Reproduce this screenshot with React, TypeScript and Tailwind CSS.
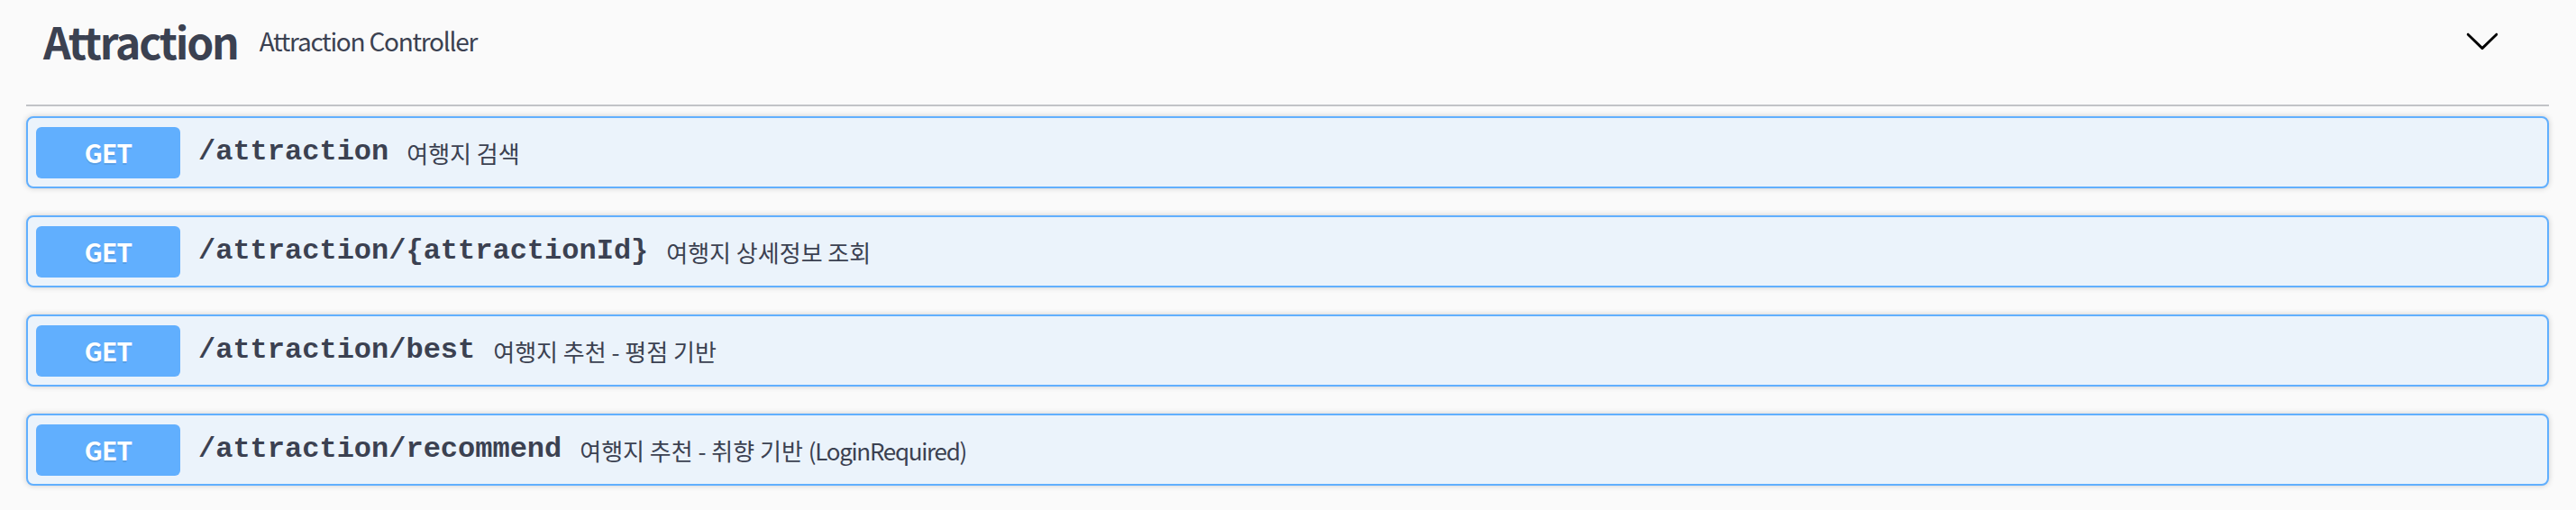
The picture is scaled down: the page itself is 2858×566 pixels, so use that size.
import React from "react";

const rows: { path: string; desc: string; extra?: string }[] = [
  { path: "/attraction", desc: "여행지 검색" },
  { path: "/attraction/{attractionId}", desc: "여행지 상세정보 조회" },
  { path: "/attraction/best", desc: "여행지 추천 - 평점 기반" },
  { path: "/attraction/recommend", desc: "여행지 추천 - 취향 기반 ", extra: "(LoginRequired)" },
];

const sans = "font-['Noto_Sans_CJK_KR','Noto_Sans',sans-serif]";

export default function App() {
  return (
    <div className="w-full h-[566px] bg-[#fafafa] pl-[29px] pr-[30px] text-[#3b4151]">
      <div className="flex items-center h-[118px] pb-[26px] border-b-2 border-[#c1c3c7]">
        <span className={`${sans} pl-[19px] text-[48px] font-bold leading-none tracking-[-0.045em]`}>
          Attraction
        </span>
        <span className={`${sans} pl-[24px] text-[28px] leading-none tracking-[-0.045em]`}>
          Attraction Controller
        </span>
        <svg className="ml-auto mr-[54px]" width="40" height="40" viewBox="0 0 20 20" fill="#000">
          <path d="M17.418 6.109c.272-.268.709-.268.979 0s.271.701 0 .969l-7.908 7.83c-.27.268-.707.268-.979 0l-7.908-7.83c-.27-.268-.27-.701 0-.969.271-.268.709-.268.979 0L10 13.25l7.418-7.141z" />
        </svg>
      </div>
      <div className="flex flex-col gap-[30px] mt-[11px]">
        {rows.map((r) => (
          <div
            key={r.path}
            className="flex items-center h-[80px] px-[9px] border-2 border-[#61affe] rounded-[8px] bg-[#ebf3fb] shadow-[0_0_6px_rgba(0,0,0,0.19)]"
          >
            <div
              className={`${sans} flex items-center justify-center w-[160px] h-[57px] rounded-[6px] bg-[#61affe] text-white text-[28px] font-bold tracking-[-0.03em] [text-shadow:0_2px_0_rgba(0,0,0,0.1)]`}
            >
              GET
            </div>
            <span className="px-[20px] font-['Liberation_Mono',monospace] font-bold text-[32px] text-[#3b4151]">
              {r.path}
            </span>
            <span className={`${sans} text-[26px] text-[#3b4151] whitespace-pre`}>
              {r.desc}
              {r.extra && <span className="tracking-[-0.05em]">{r.extra}</span>}
            </span>
          </div>
        ))}
      </div>
    </div>
  );
}
